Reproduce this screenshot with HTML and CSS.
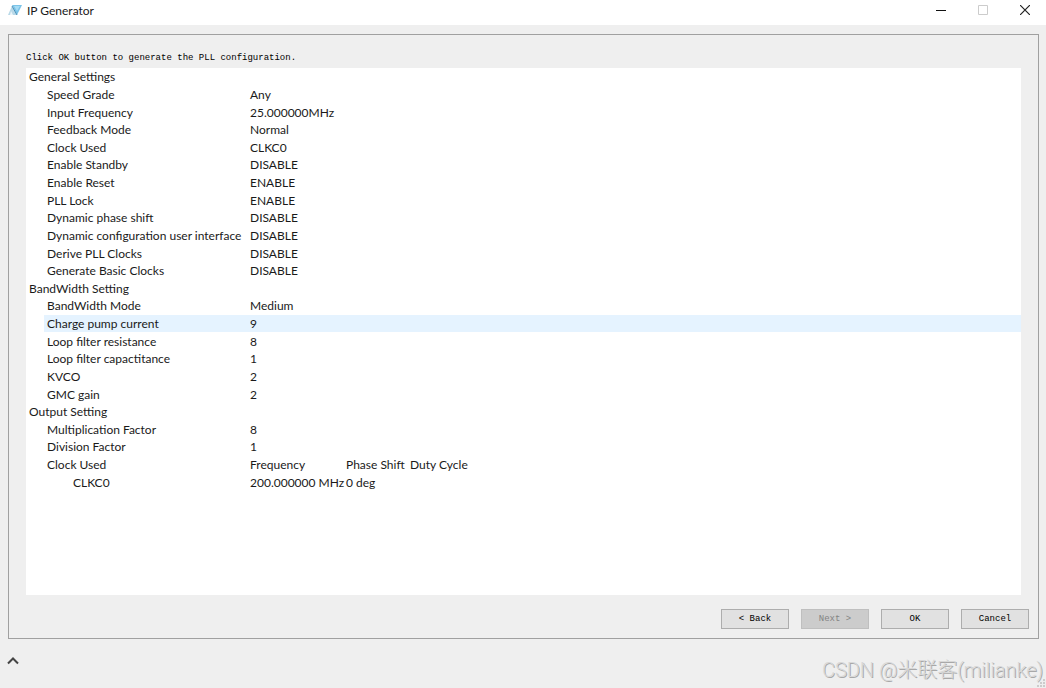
FILE: index.html
```html
<!DOCTYPE html>
<html lang="en">
<head>
  <meta charset="UTF-8">
  <meta name="viewport" content="width=device-width, initial-scale=1.0">
  <title>IP Generator</title>
  <link rel="stylesheet" href="styles.css">
</head>
<body>

  <header class="titlebar">
    <svg class="logo" viewBox="0 0 14 12" aria-hidden="true">
      <path d="M0 11 L4 2 L9 11 Z" fill="#b9d9e8"/>
      <path d="M4 1 L14 1 L9 11 Z" fill="#7cc4e8"/>
      <path d="M6 2 L12 2 L9 7 Z" fill="#a6dcf5"/>
      <path d="M4 2 L9 11" stroke="#4b90b8" stroke-width="1"/>
      <path d="M3 7 L5 11 L2 11 Z" fill="#eef6fa"/>
    </svg>
    <h1>IP Generator</h1>
    <div class="window-controls">
      <button aria-label="Minimize"><svg viewBox="0 0 10 10"><path d="M0 5.5H10" stroke="#111"/></svg></button>
      <button aria-label="Maximize" disabled><svg viewBox="0 0 10 10"><path d="M.5 .5H9.5V9.5H.5Z" stroke="#ccc" fill="none"/></svg></button>
      <button aria-label="Close"><svg viewBox="0 0 10 10"><path d="M0 0L10 10M10 0L0 10" stroke="#222" stroke-width="1.2"/></svg></button>
    </div>
  </header>

  <main class="group">
    <p class="hint">Click OK button to generate the PLL configuration.</p>

    <div class="summary">
      <table>
        <colgroup>
          <col class="col-branch"><col class="col-name"><col class="col-value"><col class="col-phase"><col>
        </colgroup>
        <tbody>
          <tr><th colspan="5">General Settings</th></tr>
          <tr><td></td><td>Speed Grade</td><td colspan="3">Any</td></tr>
          <tr><td></td><td>Input Frequency</td><td colspan="3">25.000000MHz</td></tr>
          <tr><td></td><td>Feedback Mode</td><td colspan="3">Normal</td></tr>
          <tr><td></td><td>Clock Used</td><td colspan="3">CLKC0</td></tr>
          <tr><td></td><td>Enable Standby</td><td colspan="3">DISABLE</td></tr>
          <tr><td></td><td>Enable Reset</td><td colspan="3">ENABLE</td></tr>
          <tr><td></td><td>PLL Lock</td><td colspan="3">ENABLE</td></tr>
          <tr><td></td><td>Dynamic phase shift</td><td colspan="3">DISABLE</td></tr>
          <tr><td></td><td>Dynamic configuration user interface</td><td colspan="3">DISABLE</td></tr>
          <tr><td></td><td>Derive PLL Clocks</td><td colspan="3">DISABLE</td></tr>
          <tr><td></td><td>Generate Basic Clocks</td><td colspan="3">DISABLE</td></tr>
          <tr><th colspan="5">BandWidth Setting</th></tr>
          <tr><td></td><td>BandWidth Mode</td><td colspan="3">Medium</td></tr>
          <tr class="hovered"><td></td><td>Charge pump current</td><td colspan="3">9</td></tr>
          <tr><td></td><td>Loop filter resistance</td><td colspan="3">8</td></tr>
          <tr><td></td><td>Loop filter capactitance</td><td colspan="3">1</td></tr>
          <tr><td></td><td>KVCO</td><td colspan="3">2</td></tr>
          <tr><td></td><td>GMC gain</td><td colspan="3">2</td></tr>
          <tr><th colspan="5">Output Setting</th></tr>
          <tr><td></td><td>Multiplication Factor</td><td colspan="3">8</td></tr>
          <tr><td></td><td>Division Factor</td><td colspan="3">1</td></tr>
          <tr><td></td><td>Clock Used</td><td>Frequency</td><td>Phase Shift</td><td>Duty Cycle</td></tr>
          <tr><td></td><td class="nested">CLKC0</td><td>200.000000 MHz</td><td>0 deg</td><td></td></tr>
        </tbody>
      </table>
    </div>

    <div class="actions">
      <button>&lt; Back</button>
      <button disabled>Next &gt;</button>
      <button>OK</button>
      <button>Cancel</button>
    </div>
  </main>

  <footer class="statusbar">
    <button class="expand" aria-label="Expand"><svg viewBox="0 0 12 8"><path d="M1 6.5L6 1.5L11 6.5" stroke="#444" stroke-width="2" fill="none"/></svg></button>
    <svg class="grip" viewBox="0 0 10 10" aria-hidden="true">
      <path d="M7 1h2v2h-2zM4 4h2v2h-2zM7 4h2v2h-2zM1 7h2v2h-2zM4 7h2v2h-2zM7 7h2v2h-2z" fill="#ccc"/>
    </svg>
  </footer>

  <div class="watermark">CSDN @米联客(milianke)</div>

</body>
</html>
```

FILE: styles.css
```css
* { box-sizing: border-box; }

body {
  margin: 0;
  min-height: 100vh;
  display: flex;
  flex-direction: column;
  background: #efefef;
  color: #1a1a1a;
  font-family: Lato, "Noto Sans CJK SC", sans-serif;
  font-size: 12px;
}

/* title bar */
.titlebar {
  display: flex;
  align-items: center;
  height: 25px;
  padding: 0 15px 5px 8px;
  background: #fff;
}
.logo { width: 14px; height: 12px; margin-right: 5px; }
.titlebar h1 { margin: 0; font-size: 12px; font-weight: 400; }
.window-controls { display: flex; gap: 30px; margin-left: auto; }
.window-controls button {
  display: flex;
  padding: 1px;
  border: 0;
  background: none;
}
.window-controls svg { width: 10px; height: 10px; }

/* wizard page */
.group {
  flex: 1;
  display: flex;
  flex-direction: column;
  margin: 9px 7px 0 8px;
  padding: 15px 9px 9px 17px;
  border: 1px solid #a0a0a0;
}
.hint {
  margin: 0;
  height: 18px;
  line-height: 16px;
  color: #000;
  font-family: "Liberation Mono", monospace;
  font-size: 9px;
}
.summary {
  flex: 1;
  margin-right: 8px;
  background: #fff;
}
.summary table {
  width: 100%;
  height: 423px;
  table-layout: fixed;
  border-collapse: collapse;
  line-height: 17px;
}
.summary th,
.summary td {
  padding: 0 0 0 3px;
  font-weight: 400;
  text-align: left;
  white-space: nowrap;
}
.col-branch { width: 18px; }
.col-name { width: 203px; }
.col-value { width: 96px; }
.col-phase { width: 64px; }
.summary .nested { padding-left: 29px; }
.hovered td:not(:first-child) { background: #e5f3ff; }

.actions {
  display: flex;
  justify-content: flex-end;
  gap: 12px;
  margin-top: 14px;
}
.actions button {
  width: 68px;
  height: 20px;
  padding: 0;
  border: 1px solid #adadad;
  background: #e1e1e1;
  color: #000;
  font-family: "Liberation Mono", monospace;
  font-size: 9px;
}
.actions button:disabled {
  border-color: #bfbfbf;
  background: #ccc;
  color: #838383;
}

/* bottom strip */
.statusbar {
  display: flex;
  justify-content: space-between;
  align-items: flex-end;
  height: 49px;
  padding-left: 7px;
}
.expand {
  align-self: flex-start;
  display: flex;
  margin-top: 18px;
  padding: 0;
  border: 0;
  background: none;
}
.expand svg { width: 12px; height: 8px; }
.grip { width: 10px; height: 10px; }

.watermark {
  position: absolute;
  right: 3px;
  bottom: 4px;
  color: #d8d8d8;
  font-family: Roboto, "Noto Sans CJK SC", sans-serif;
  font-size: 20px;
  font-weight: 300;
  line-height: 28px;
  text-shadow: 1px 1px 0 #a8a8a8;
}
```
